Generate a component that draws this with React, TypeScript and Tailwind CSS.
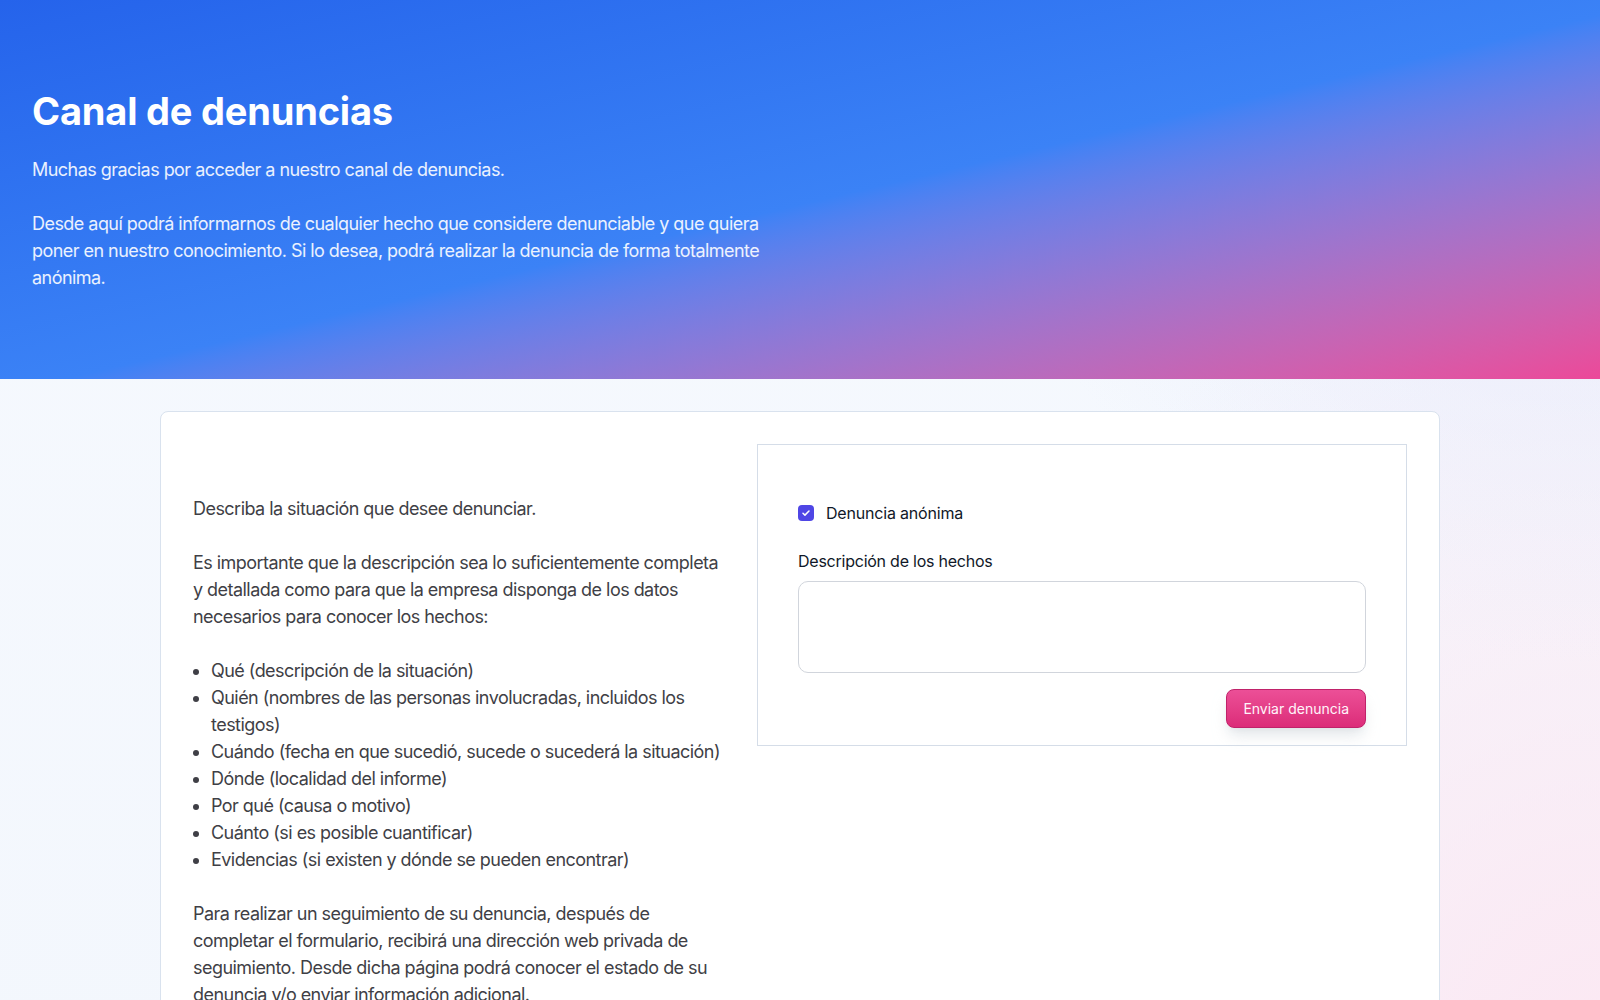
import React from "react";

export default function App() {
  return (
    <div className="min-h-screen font-['Inter','Noto_Sans',sans-serif] bg-[radial-gradient(ellipse_40%_60%_at_100%_0%,#e5e9fb,transparent),radial-gradient(ellipse_45%_80%_at_100%_100%,#fce7f2,transparent),linear-gradient(to_bottom,#f6f9fe,#f3f7fd)]">
      <header className="h-[379px] bg-gradient-to-br from-[#2563eb] via-[#3b82f6] via-[52%] to-[#ec4899] px-8 pt-[91px]">
        <div className="max-w-3xl">
          <h1 className="text-[38px] leading-10 font-bold text-white tracking-[-0.005em]">
            Canal de denuncias
          </h1>
          <div className="mt-[25px] text-lg leading-[27px] tracking-[-0.03em] text-white/90">
            <p>Muchas gracias por acceder a nuestro canal de denuncias.</p>
            <p className="mt-[27px]">
              Desde aquí podrá informarnos de cualquier hecho que considere
              denunciable y que quiera poner en nuestro conocimiento. Si lo
              desea, podrá realizar la denuncia de forma totalmente anónima.
            </p>
          </div>
        </div>
      </header>

      <main className="px-8 pt-8 pb-16">
        <div className="mx-auto max-w-7xl bg-white border border-[#d9e2ee] rounded-lg p-8 flex gap-8 items-start">
          <div className="w-[532px] shrink-0 pt-[51px] text-lg leading-[27px] tracking-[-0.03em] text-[#3f3f46]">
            <p>Describa la situación que desee denunciar.</p>
            <p className="mt-[27px]">
              Es importante que la descripción sea lo suficientemente completa
              y detallada como para que la empresa disponga de los datos
              necesarios para conocer los hechos:
            </p>
            <ul className="mt-[27px] list-disc pl-[18px]">
              <li>Qué (descripción de la situación)</li>
              <li>Quién (nombres de las personas involucradas, incluidos los testigos)</li>
              <li>Cuándo (fecha en que sucedió, sucede o sucederá la situación)</li>
              <li>Dónde (localidad del informe)</li>
              <li>Por qué (causa o motivo)</li>
              <li>Cuánto (si es posible cuantificar)</li>
              <li>Evidencias (si existen y dónde se pueden encontrar)</li>
            </ul>
            <p className="mt-[27px]">
              Para realizar un seguimiento de su denuncia, después de
              completar el formulario, recibirá una dirección web privada de
              seguimiento. Desde dicha página podrá conocer el estado de su
              denuncia y/o enviar información adicional.
            </p>
          </div>

          <div className="flex-1 border border-[#d5dde8] pt-14 px-10 pb-[17px]">
            <label className="flex items-center gap-3 text-base leading-6 tracking-[-0.012em] text-gray-900">
              <span className="w-4 h-4 rounded-[4px] bg-[#4f46e5] flex items-center justify-center">
                <svg viewBox="0 0 16 16" className="w-3 h-3" fill="none">
                  <path d="M4 8.3l2.6 2.5L12 5.4" stroke="white" strokeWidth="2" strokeLinecap="round" strokeLinejoin="round" />
                </svg>
              </span>
              Denuncia anónima
            </label>
            <div className="mt-6 text-base leading-6 tracking-[-0.015em] text-gray-900">
              Descripción de los hechos
            </div>
            <textarea className="mt-2 block w-full h-[92px] rounded-[10px] border border-gray-300 bg-white resize-none outline-none" />
            <div className="mt-4 flex justify-end">
              <button className="h-[39px] px-4 rounded-lg border border-[#c0226a] bg-gradient-to-b from-[#ec4f97] to-[#dc2b79] text-[#fff5fa] text-sm shadow-lg shadow-gray-300/60">
                Enviar denuncia
              </button>
            </div>
          </div>
        </div>
      </main>
    </div>
  );
}
